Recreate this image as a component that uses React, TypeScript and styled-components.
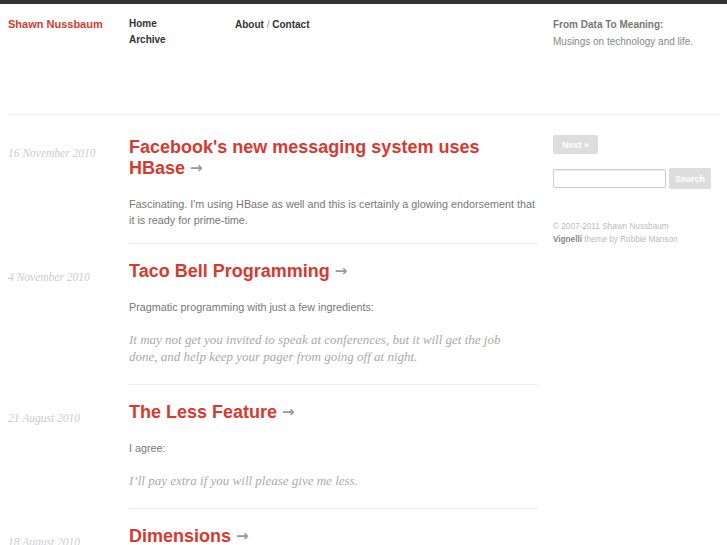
import React from 'react';
import styled, { createGlobalStyle } from 'styled-components';

const GlobalStyle = createGlobalStyle`
  html, body {
    margin: 0;
    padding: 0;
    background: #fff;
  }
  body {
    border-top: 4px solid #333;
    font-family: "Liberation Sans", Arial, sans-serif;
    font-size: 11px;
    color: #777;
  }
  a {
    text-decoration: none;
  }
`;

interface Post {
  date: string;
  title: string;
  body: string;
  quote?: string;
}

const posts: Post[] = [
  {
    date: '16 November 2010',
    title: "Facebook's new messaging system uses HBase",
    body: "Fascinating. I'm using HBase as well and this is certainly a glowing endorsement that it is ready for prime-time.",
  },
  {
    date: '4 November 2010',
    title: 'Taco Bell Programming',
    body: 'Pragmatic programming with just a few ingredients:',
    quote:
      'It may not get you invited to speak at conferences, but it will get the job done, and help keep your pager from going off at night.',
  },
  {
    date: '21 August 2010',
    title: 'The Less Feature',
    body: 'I agree:',
    quote: 'I\u2019ll pay extra if you will please give me less.',
  },
  {
    date: '18 August 2010',
    title: 'Dimensions',
    body: '',
  },
];

const App = () => {
  return (
    <Page>
      <GlobalStyle />
      <Header>
        <Logo href="#">Shawn Nussbaum</Logo>
        <NavCol>
          <NavLink href="#">Home</NavLink>
          <NavLink href="#">Archive</NavLink>
        </NavCol>
        <NavCol>
          <div>
            <NavLink href="#">About</NavLink>
            <Slash> / </Slash>
            <NavLink href="#">Contact</NavLink>
          </div>
        </NavCol>
        <Tagline>
          <h4>From Data To Meaning:</h4>
          <p>Musings on technology and life.</p>
        </Tagline>
      </Header>

      <Main>
        <Posts>
          {posts.map((post) => (
            <PostRow key={post.title}>
              <PostDate>{post.date}</PostDate>
              <Entry>
                <Title>
                  <a href="#">{post.title}</a> <Arrow>&rarr;</Arrow>
                </Title>
                {post.body && <Body>{post.body}</Body>}
                {post.quote && <Quote>{post.quote}</Quote>}
              </Entry>
            </PostRow>
          ))}
        </Posts>

        <Sidebar>
          <Button>Next &raquo;</Button>
          <SearchForm>
            <SearchInput type="text" />
            <SearchButton>Search</SearchButton>
          </SearchForm>
          <Credits>
            <p>&copy; 2007-2011 Shawn Nussbaum</p>
            <p>
              <strong>Vignelli</strong> theme by Robbie Manson
            </p>
          </Credits>
        </Sidebar>
      </Main>
    </Page>
  );
};

export default App;

const Page = styled.div`
  padding: 0 8px;
  height: 541px;
  overflow: hidden;
`;

const Header = styled.header`
  display: grid;
  grid-template-columns: 121px 106px 318px 1fr;
  padding-top: 12px;
  height: 98px;
  border-bottom: 1px solid #eee;
`;

const Logo = styled.a`
  color: #d8392e;
  font-weight: bold;
  font-size: 11px;
  line-height: 16px;
`;

const NavCol = styled.div`
  display: flex;
  flex-direction: column;
  line-height: 16px;
`;

const NavLink = styled.a`
  color: #333;
  font-weight: bold;
  font-size: 10px;
`;

const Slash = styled.span`
  color: #999;
  font-size: 10px;
`;

const Tagline = styled.div`
  h4 {
    margin: 0;
    font-size: 10px;
    line-height: 18px;
    color: #777;
    font-weight: bold;
  }
  p {
    margin: 0;
    font-size: 10px;
    line-height: 16px;
    color: #888;
  }
`;

const Main = styled.div`
  display: flex;
  gap: 15px;
  padding-top: 20px;
`;

const Posts = styled.div`
  width: 530px;
  padding-top: 2px;
`;

const PostRow = styled.article`
  display: grid;
  grid-template-columns: 121px 409px;
  margin-bottom: 17px;
`;

const PostDate = styled.div`
  font-family: "Liberation Serif", "Times New Roman", serif;
  font-style: italic;
  font-size: 11.5px;
  color: #ccc;
  padding-top: 10px;
`;

const Entry = styled.div`
  border-bottom: 1px solid #eee;
  padding-bottom: 15px;
`;

const Title = styled.h2`
  margin: 0 0 16px;
  font-size: 18px;
  line-height: 21px;
  font-weight: bold;
  a {
    color: #d8392e;
  }
`;

const Arrow = styled.span`
  font-family: "DejaVu Sans", sans-serif;
  font-size: 15px;
  font-weight: bold;
  color: #999;
  position: relative;
  top: -1px;
`;

const Body = styled.p`
  margin: 0;
  font-size: 10.8px;
  line-height: 16px;
  color: #777;
`;

const Quote = styled.blockquote`
  margin: 16px 0 4px;
  max-width: 395px;
  font-family: "Liberation Serif", "Times New Roman", serif;
  font-style: italic;
  font-size: 13px;
  line-height: 17px;
  color: #aaa;
`;

const Sidebar = styled.aside`
  display: flex;
  flex-direction: column;
  align-items: flex-start;
  width: 160px;
`;

const Button = styled.button`
  background: #ddd;
  color: #fff;
  border: none;
  border-radius: 2px;
  font-family: "Liberation Sans", Arial, sans-serif;
  font-weight: bold;
  font-size: 9px;
  height: 19px;
  padding: 0 9px;
`;

const SearchForm = styled.form`
  display: flex;
  align-items: center;
  gap: 3px;
  margin-top: 14px;
`;

const SearchInput = styled.input`
  box-sizing: border-box;
  width: 113px;
  height: 19px;
  border: 1px solid #ccc;
  border-radius: 2px;
  box-shadow: inset 0 1px 1px #eee;
`;

const SearchButton = styled(Button)`
  height: 21px;
  padding: 0 6px;
`;

const Credits = styled.div`
  margin-top: 31px;
  font-size: 8.2px;
  line-height: 13px;
  color: #bbb;
  p {
    margin: 0;
  }
  strong {
    color: #888;
  }
`;
